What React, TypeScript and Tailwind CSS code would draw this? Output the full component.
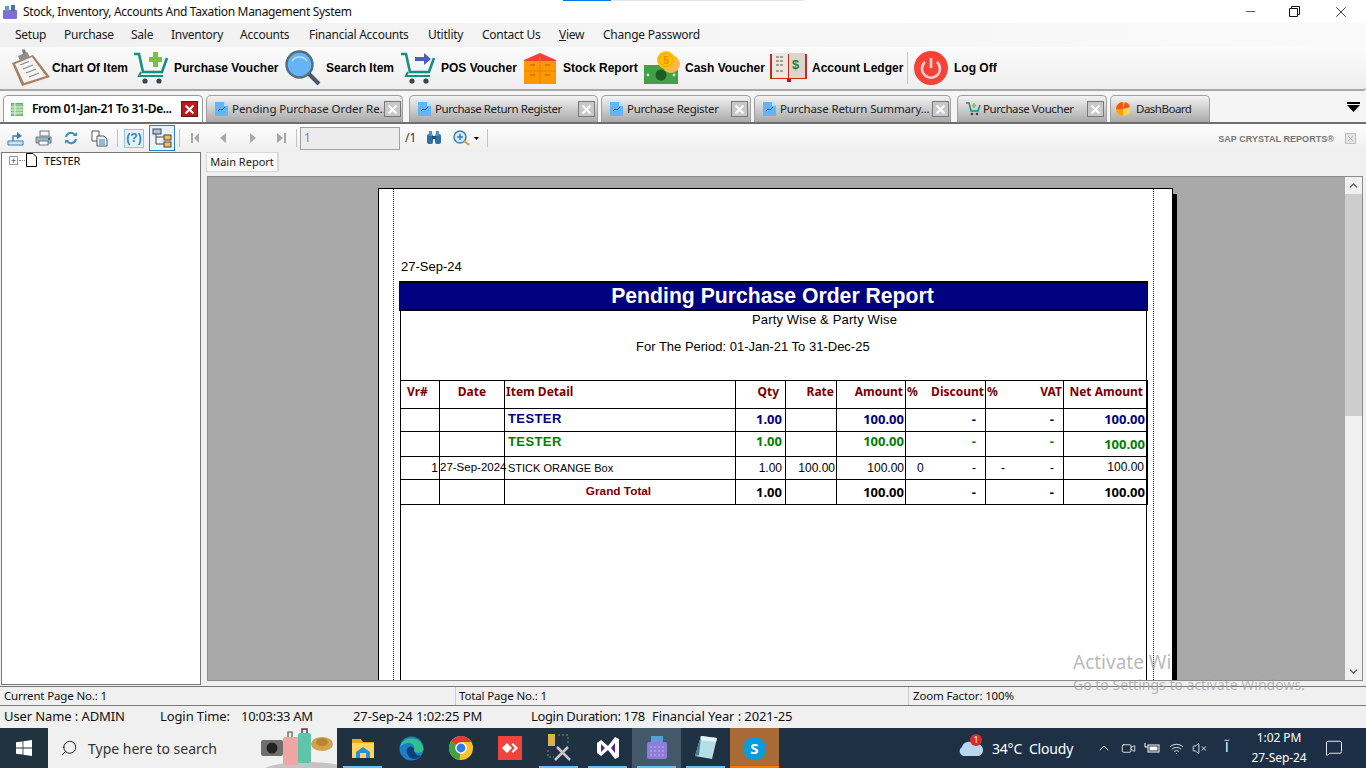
import React from "react";
import { ChevronUp, ChevronDown, X, Minus, Search, Video, Wifi, VolumeX, MessageSquare } from "lucide-react";

const ui = "font-['Noto_Sans',sans-serif]";
const report = "font-['Liberation_Sans',sans-serif]";

const menus = [
  ["Setup", "w-[49px]"],
  ["Purchase", "w-[67px]"],
  ["Sale", "w-[40px]"],
  ["Inventory", "w-[69px]"],
  ["Accounts", "w-[69px]"],
  ["Financial Accounts", "w-[119px]"],
  ["Utitlity", "w-[54px]"],
  ["Contact Us", "w-[77px]"],
];

const ClipboardIcon = () => (
  <svg width="40" height="38" viewBox="0 0 40 38">
    <path d="M2 14 L23 6 L40 28 L12 37 Z" fill="#a9805f" />
    <path d="M5 15 L22 8 L36 27 L14 34 Z" fill="#f4f4f2" />
    <path d="M8 7 L17 3 L20 8 L10 12 Z" fill="#8f8f8f" />
    <path d="M12 0.5 L15 0.5 L16 4 L13 5 Z" fill="#777" />
    <path d="M10 16 L19 12.5 M13 20 L23 16 M16 24 L26 20 M19 28 L29 24" stroke="#8a8a8a" strokeWidth="1.2" />
  </svg>
);

const CartIcon = ({ color }: { color: string }) => (
  <svg width="36" height="34" viewBox="0 0 36 34">
    <path d="M1 3 H6 L10 21 H29 L34 7" fill="none" stroke="#14917f" strokeWidth="2.6" />
    <path d="M8 21 L6 25 H30" fill="none" stroke="#14917f" strokeWidth="2" />
    <circle cx="12" cy="30" r="2.6" fill="#37474f" />
    <circle cx="26" cy="30" r="2.6" fill="#37474f" />
    {color === "green" ? (
      <path d="M16 7 H20 V2 H25 V7 H29 V12 H25 V17 H20 V12 H16 Z" transform="translate(0 -1)" fill="#7ac142" />
    ) : (
      <path d="M15 6 H24 V2 L31 8 L24 14 V10 H15 Z" fill="#4a5ec0" />
    )}
  </svg>
);

const MagnifierIcon = () => (
  <svg width="36" height="36" viewBox="0 0 36 36">
    <path d="M23 23 L34 34" stroke="#475a63" strokeWidth="4" />
    <circle cx="14.5" cy="14.5" r="13" fill="#64b5f6" stroke="#546e7a" strokeWidth="2.4" />
    <path d="M7 11 A9 9 0 0 1 22 11" fill="none" stroke="#bbdefb" strokeWidth="1.6" />
  </svg>
);

const BoxIcon = () => (
  <svg width="32" height="31" viewBox="0 0 32 31">
    <path d="M0 7 L16 0 L32 7 V10 H0 Z" fill="#f44336" />
    <rect y="8" width="32" height="23" fill="#ff9800" />
    <path d="M16 4 V31 M0 18 H32" stroke="#e08600" strokeWidth="1.2" />
    <path d="M6 12 H11 M21 12 H26 M6 22 H11 M21 22 H26" stroke="#a65f00" strokeWidth="1.2" />
  </svg>
);

const CashIcon = () => (
  <svg width="36" height="34" viewBox="0 0 36 34">
    <rect y="14" width="34" height="19" fill="#43a047" />
    <circle cx="17" cy="24" r="5.5" fill="#1b5e20" />
    <circle cx="4" cy="24" r="1.4" fill="#c8e6c9" />
    <circle cx="30" cy="24" r="1.4" fill="#c8e6c9" />
    <circle cx="27" cy="13" r="9" fill="#ffb74d" />
    <circle cx="22" cy="9" r="9" fill="#ffc107" />
    <circle cx="22" cy="9" r="6.5" fill="none" stroke="#ffa000" />
    <text x="19" y="13" fontSize="11" fill="#f08c00" fontFamily="Liberation Sans">5</text>
  </svg>
);

const LedgerIcon = () => (
  <svg width="38" height="30" viewBox="0 0 38 30">
    <rect y="1" width="37" height="25" fill="#c62828" />
    <rect x="2" y="0" width="16" height="25" fill="#efe6dd" />
    <rect x="19" y="0" width="16" height="25" fill="#dcd5cc" />
    <path d="M6 4 H14 M6 8 H14 M6 12 H14 M6 18 H14" stroke="#888" strokeWidth="1.4" strokeDasharray="3 1" />
    <text x="22" y="16" fontSize="13" fontWeight="700" fill="#2e7d32" fontFamily="Liberation Sans">$</text>
    <path d="M17 26 H21 V29 H17 Z" fill="#b71c1c" />
  </svg>
);

const PowerIcon = () => (
  <svg width="34" height="34" viewBox="0 0 34 34">
    <circle cx="17" cy="17" r="17" fill="#f44336" />
    <path d="M11 11 A9 9 0 1 0 23 11" fill="none" stroke="#ffcdd2" strokeWidth="2.6" />
    <path d="M17 7 V17" stroke="#ffcdd2" strokeWidth="2.6" />
  </svg>
);

const tools = [
  { label: "Chart Of Item", icon: <ClipboardIcon />, cls: "w-[40px] mr-[2px]", text: "w-[81px]" },
  { label: "Purchase Voucher", icon: <CartIcon color="green" />, cls: "w-[36px] mr-[5px]", text: "w-[111px]" },
  { label: "Search Item", icon: <MagnifierIcon />, cls: "w-[36px] mr-[5px]", text: "w-[74px]" },
  { label: "POS Voucher", icon: <CartIcon color="blue" />, cls: "w-[36px] mr-[5px]", text: "w-[83px]" },
  { label: "Stock Report", icon: <BoxIcon />, cls: "w-[32px] mr-[7px]", text: "w-[81px]" },
  { label: "Cash Voucher", icon: <CashIcon />, cls: "w-[36px] mr-[5px]", text: "w-[85px]" },
  { label: "Account Ledger", icon: <LedgerIcon />, cls: "w-[38px] mr-[4px]", text: "w-[93px]" },
];

const DocIcon = () => (
  <svg width="13" height="16" viewBox="0 0 13 16">
    <path d="M0 1 H9 L13 5 V15 H0 Z" fill="#64b5f6" />
    <path d="M9 1 L13 5 H9 Z" fill="#bbdefb" />
    <path d="M3 10 L5 8 L7 9 L10 6" fill="none" stroke="#1565c0" strokeWidth="1" />
  </svg>
);

const TabClose = () => (
  <span className="w-[17px] h-[16px] border border-[#777] bg-[#c8c8c8] flex items-center justify-center">
    <X size={13} strokeWidth={4} className="text-white" />
  </span>
);

function CartMini() {
  return (
    <svg width="15" height="14" viewBox="0 0 15 14">
      <path d="M0 1 H3 L5 9 H12 L14 3" fill="none" stroke="#14917f" strokeWidth="1.5" />
      <circle cx="6" cy="12" r="1.3" fill="#37474f" />
      <circle cx="11" cy="12" r="1.3" fill="#37474f" />
      <path d="M8 1 V6 M6 3.5 H10" stroke="#7ac142" strokeWidth="1.4" />
    </svg>
  );
}

const tabs = [
  { label: "Pending Purchase Order Re...", w: "w-[197px] mr-[6px]", text: "w-[152px] tracking-[-0.05px]", icon: <DocIcon /> },
  { label: "Purchase Return Register", w: "w-[189px] mr-[3px]", text: "w-[141px] tracking-[-0.42px]", icon: <DocIcon /> },
  { label: "Purchase Register", w: "w-[150px] mr-[3px]", text: "w-[102px] tracking-[-0.33px]", icon: <DocIcon /> },
  { label: "Purchase Return Summary...", w: "w-[197px] mr-[6px]", text: "w-[152px] tracking-[-0.14px]", icon: <DocIcon /> },
  { label: "Purchase Voucher", w: "w-[150px] mr-[3px]", text: "w-[102px] tracking-[-0.42px]", icon: <CartMini /> },
];

const tabBg = "bg-gradient-to-b from-[#f3f3f3] to-[#a9a9a9] border border-b-0 border-[#a0a0a0] rounded-t-[5px]";

const TitleBar = () => (
  <div className={`${ui} h-[23px] bg-white flex items-center relative`}>
    <div className="absolute left-[563px] top-0 w-[48px] h-[1px] bg-[#0078d7]" />
    <div className="absolute left-[611px] top-0 w-[193px] h-[1px] bg-[#e5e5e5]" />
    <svg className="ml-[3px]" width="14" height="14" viewBox="0 0 14 14">
      <rect x="0" y="5" width="14" height="9" rx="1" fill="#7e6fd0" />
      <rect x="2" y="1" width="4" height="5" fill="#5b9bd5" />
      <rect x="8" y="0" width="4" height="6" fill="#4a6fb5" />
    </svg>
    <span className="ml-[6px] text-[12px] text-[#111] tracking-[-0.33px]">Stock, Inventory, Accounts And Taxation Management System</span>
    <div className="ml-auto flex items-center text-black">
      <Minus size={15} strokeWidth={1} className="mr-[31px]" />
      <svg className="mr-[32px]" width="11" height="11" viewBox="0 0 11 11">
        <path d="M.5 2.5 H8.5 V10.5 H.5 Z M2.5 2.5 V.5 H10.5 V8.5 H8.5" fill="none" stroke="#111" />
      </svg>
      <X size={18} strokeWidth={1} className="mr-[16px]" />
    </div>
  </div>
);

const MenuBar = () => (
  <div className={`${ui} h-[24px] pl-[15px] bg-gradient-to-r from-[#f0f0f0] to-[#fafafa] flex items-center text-[12px] text-[#1a1a1a] tracking-[-0.25px]`}>
    {menus.map(([label, w]) => (
      <span key={label} className={w}>{label}</span>
    ))}
    <span className="w-[44px]"><u>V</u>iew</span>
    <span>Change Password</span>
  </div>
);

const ToolBar = () => (
  <div className={`${report} h-[44px] bg-gradient-to-b from-[#fbfbfb] to-[#eeeeee] border-b-2 border-[#a8a8a8] rounded-br-[3px] flex items-center pl-[10px] text-[12px] font-bold text-black`}>
    {tools.map((t) => (
      <React.Fragment key={t.label}>
        <span className={`${t.cls} flex justify-center shrink-0`}>{t.icon}</span>
        <span className={`${t.text} whitespace-nowrap shrink-0`}>{t.label}</span>
      </React.Fragment>
    ))}
    <span className="w-[1px] h-[32px] bg-[#c4c4c4] ml-[2px] mr-[6px]" />
    <PowerIcon />
    <span className="ml-[6px]">Log Off</span>
  </div>
);

const TabStrip = () => (
  <div className={`${ui} h-[31px] bg-[#f5f5f5] flex items-end pl-[3px] text-[11.5px] text-[#222] relative`}>
    <div className="w-[200px] h-[27px] mr-[3px] bg-white border border-b-0 border-[#999] rounded-t-[5px] flex items-center pl-[7px]">
      <svg width="12" height="13" viewBox="0 0 12 13">
        <rect width="12" height="13" fill="#8bc98a" stroke="#4c9a4c" />
        <path d="M0 4 H12 M0 7 H12 M0 10 H12 M4 0 V13" stroke="#e3f2e3" />
      </svg>
      <span className="ml-[9px] w-[149px] font-semibold text-[12px] tracking-[-0.4px] text-black whitespace-nowrap">From 01-Jan-21 To 31-De...</span>
      <span className="w-[17px] h-[16px] border border-[#7a1010] bg-[#b71c1c] flex items-center justify-center">
        <X size={13} strokeWidth={4} className="text-white" />
      </span>
    </div>
    {tabs.map((t) => (
      <div key={t.label} className={`${t.w} h-[27px] ${tabBg} flex items-center pl-[8px]`}>
        <span className="w-[17px] flex shrink-0">{t.icon}</span>
        <span className={`${t.text} whitespace-nowrap shrink-0`}>{t.label}</span>
        <span className="ml-auto mr-[2px]"><TabClose /></span>
      </div>
    ))}
    <div className={`w-[100px] h-[27px] ${tabBg} flex items-center pl-[5px]`}>
      <svg width="14" height="14" viewBox="0 0 14 14">
        <circle cx="7" cy="7" r="7" fill="#ffd54f" />
        <path d="M7 7 L7 0 A7 7 0 0 0 0 7 Z" fill="#f4511e" />
        <path d="M7 7 L14 5 A7 7 0 0 0 9 0 Z" fill="#f4511e" />
        <path d="M7 7 L0 7 A7 7 0 0 0 7 14 Z" fill="#ffa000" />
      </svg>
      <span className="ml-[6px] tracking-[-0.5px]">DashBoard</span>
    </div>
    <svg className="absolute right-[6px] top-[11px]" width="13" height="10" viewBox="0 0 13 10">
      <rect width="13" height="2" fill="#000" />
      <path d="M0 3 H13 L6.5 10 Z" fill="#000" />
    </svg>
  </div>
);

const ViewerToolbar = () => (
  <div className="h-[28px] bg-gradient-to-b from-[#fdfdfd] to-[#eeeeee] flex items-center pl-[7px] text-[#3f7cae]">
    <svg width="17" height="16" viewBox="0 0 17 16" className="mr-[11px]">
      <path d="M1 11 H16 V15 H1 Z" fill="#cfe4f5" stroke="#3b7fb6" />
      <path d="M6 11 V6 H11" fill="none" stroke="#3b7fb6" strokeWidth="1.4" />
      <path d="M10 2 L15 6 L10 9 Z" fill="#3b7fb6" />
    </svg>
    <svg width="17" height="16" viewBox="0 0 17 16" className="mr-[12px]">
      <rect x="5" y="1" width="9" height="5" fill="#f4f4f4" stroke="#777" />
      <path d="M1 7 H16 V13 H1 Z" fill="#9db4c8" stroke="#6b7f8f" />
      <rect x="4" y="11" width="9" height="4" fill="#fff" stroke="#777" />
      <rect x="13" y="8" width="2" height="2" fill="#2e7d32" />
    </svg>
    <svg width="14" height="14" viewBox="0 0 14 14" className="mr-[13px]">
      <path d="M2 6 A5 5 0 0 1 11 4 M12 8 A5 5 0 0 1 3 10" fill="none" stroke="#3b8ec2" strokeWidth="2" />
      <path d="M9 5 H13 V1 Z M5 9 H1 V13 Z" fill="#3b8ec2" />
    </svg>
    <svg width="17" height="17" viewBox="0 0 17 17" className="mr-[9px]">
      <path d="M1 1 H8 V11 H1 Z" fill="#fff" stroke="#555" />
      <path d="M6 6 H13 L16 9 V16 H6 Z" fill="#eaf2f9" stroke="#555" />
      <path d="M8 10 H14 M8 12 H14 M8 14 H14" stroke="#3b7fb6" />
    </svg>
    <span className="w-[1px] h-[18px] bg-[#c4c4c4] mr-[6px]" />
    <span className="w-[20px] h-[19px] border border-[#8fc4ee] bg-[#e6f3fc] text-[12px] font-bold flex items-center justify-center text-[#2f7fc0] mr-[5px] font-['Liberation_Sans',sans-serif]">(?)</span>
    <span className="w-[26px] h-[26px] border border-[#2f7fc0] bg-[#eaf3fb] flex items-center justify-center mr-[4px]">
      <svg width="20" height="20" viewBox="0 0 20 20">
        <rect x="1" y="1" width="8" height="5" fill="#a9c5e6" stroke="#444" />
        <rect x="12" y="7" width="7" height="5" fill="#f3c04f" stroke="#444" />
        <rect x="12" y="14" width="7" height="5" fill="#f3c04f" stroke="#444" />
        <path d="M4 6 V16 H12 M4 9 H12" fill="none" stroke="#444" />
      </svg>
    </span>
    <span className="w-[1px] h-[18px] bg-[#c4c4c4] mr-[11px]" />
    <svg width="100" height="12" viewBox="0 0 100 12" className="mr-[5px]" fill="#a8a8a8">
      <path d="M0 1 H2 V11 H0 Z M8 1 V11 L3 6 Z" />
      <path d="M35 1 V11 L29 6 Z" />
      <path d="M59 1 V11 L65 6 Z" />
      <path d="M86 1 V11 L92 6 Z M93 1 H95 V11 H93 Z" />
    </svg>
    <span className="w-[1px] h-[18px] bg-[#c4c4c4] mr-[3px]" />
    <div className={`${ui} w-[100px] h-[23px] border border-[#a0a0a0] bg-[#ececec] text-[12px] text-[#888] pl-[3px] leading-[20px]`}>1</div>
    <span className={`${ui} ml-[5px] text-[12px] text-[#333] w-[21px]`}>/1</span>
    <svg width="16" height="14" viewBox="0 0 16 14" className="mr-[11px]">
      <rect x="1" y="3" width="6" height="10" rx="2" fill="#2f6ea5" />
      <rect x="9" y="3" width="6" height="10" rx="2" fill="#2f6ea5" />
      <rect x="3" y="0" width="3" height="5" fill="#4d8fc6" />
      <rect x="10" y="0" width="3" height="5" fill="#4d8fc6" />
      <rect x="6" y="5" width="4" height="3" fill="#1d4f7c" />
    </svg>
    <svg width="17" height="16" viewBox="0 0 17 16">
      <circle cx="7" cy="7" r="6" fill="#d4e8f8" stroke="#3b7fb6" strokeWidth="1.5" />
      <path d="M7 4 V10 M4 7 H10" stroke="#2f7fc0" strokeWidth="1.5" />
      <path d="M11 11 L16 15" stroke="#e09a3e" strokeWidth="2" />
    </svg>
    <svg width="5" height="3" viewBox="0 0 5 3" className="ml-[4px] mr-[8px]"><path d="M0 0 H5 L2.5 3 Z" fill="#000" /></svg>
    <span className="w-[1px] h-[18px] bg-[#c4c4c4]" />
    <span className={`${report} ml-auto mt-[3px] text-[9px] font-bold text-[#777] tracking-[0.05px]`}>SAP CRYSTAL REPORTS®</span>
    <span className="ml-[11px] mr-[10px] w-[11px] h-[11px] border border-[#c0c0c0] bg-[#e4e4e4] flex items-center justify-center">
      <X size={9} className="text-[#a8a8a8]" />
    </span>
  </div>
);

const cols = ["w-[39px]", "w-[65px]", "w-[231px]", "w-[50px]", "w-[51px]", "w-[69px]", "w-[80px]", "w-[78px]", "w-[84px]"];
const cell = "border border-black align-middle p-0";
const hd = `${ui} text-[12px] leading-[14px] font-bold text-[#7b0000] pb-[5px]`;

const Totals = ({ color, pad, netPad }: { color: string; pad: string; netPad?: string }) => {
  const num = `${ui} text-[13px] leading-[14px] font-bold ${color}`;
  return (
    <>
      <td className={`${cell} ${num} ${pad} text-right pr-[3px]`}>1.00</td>
      <td className={cell} />
      <td className={`${cell} ${num} ${pad} text-right pr-[1px]`}>100.00</td>
      <td className={`${cell} ${num} ${pad} text-right pr-[9px]`}>-</td>
      <td className={`${cell} ${num} ${pad} text-right pr-[9px]`}>-</td>
      <td className={`${cell} ${num} ${netPad ?? pad} text-right pr-[2px]`}>100.00</td>
    </>
  );
};

const ReportTable = () => (
  <table className="table-fixed border-collapse w-[747px] -ml-[1px]">
    <colgroup>{cols.map((c, i) => <col key={i} className={c} />)}</colgroup>
    <tbody>
      <tr className="h-[28px]">
        <td className={`${cell} ${hd} pl-[6px]`}>Vr#</td>
        <td className={`${cell} ${hd} text-center`}>Date</td>
        <td className={`${cell} ${hd} pl-[1px]`}>Item Detail</td>
        <td className={`${cell} ${hd} text-right pr-[6px]`}>Qty</td>
        <td className={`${cell} ${hd} text-right pr-[2px]`}>Rate</td>
        <td className={`${cell} ${hd} text-right pr-[2px]`}>Amount</td>
        <td className={`${cell} ${hd}`}>
          <div className="flex justify-between pl-[1px] pr-[1px]"><span>%</span><span>Discount</span></div>
        </td>
        <td className={`${cell} ${hd}`}>
          <div className="flex justify-between pl-[1px] pr-[1px]"><span>%</span><span>VAT</span></div>
        </td>
        <td className={`${cell} ${hd} text-right pr-[4px]`}>Net Amount</td>
      </tr>
      <tr className="h-[23px]">
        <td className={cell} />
        <td className={cell} />
        <td className={`${cell} ${report} text-[13px] leading-[14px] pb-[3px] font-bold tracking-[0.4px] text-[#000080] pl-[3px]`}>TESTER</td>
        <Totals color="text-[#000080]" pad="pb-[2px]" />
      </tr>
      <tr className="h-[25px]">
        <td className={cell} />
        <td className={cell} />
        <td className={`${cell} ${report} text-[13px] leading-[14px] pb-[4px] font-bold tracking-[0.4px] text-[#008000] pl-[3px]`}>TESTER</td>
        <Totals color="text-[#008000]" pad="pb-[6px]" netPad="pb-0" />
      </tr>
      <tr className={`h-[23px] ${report} text-[12px] text-black`}>
        <td className={`${cell} text-right whitespace-nowrap pr-[1px]`}>1</td>
        <td className={`${cell} whitespace-nowrap text-[11.5px]`}>27-Sep-2024</td>
        <td className={`${cell} pl-[3px] text-[11px]`}>STICK ORANGE Box</td>
        <td className={`${cell} text-right pr-[3px]`}>1.00</td>
        <td className={`${cell} text-right pr-[1px]`}>100.00</td>
        <td className={`${cell} text-right pr-[1px]`}>100.00</td>
        <td className={cell}>
          <div className="flex justify-between pl-[11px] pr-[9px]"><span>0</span><span>-</span></div>
        </td>
        <td className={cell}>
          <div className="flex justify-between pl-[15px] pr-[9px]"><span>-</span><span>-</span></div>
        </td>
        <td className={`${cell} text-right pr-[3px] pb-[2px]`}>100.00</td>
      </tr>
      <tr className="h-[25px]">
        <td className={cell} />
        <td className={cell} />
        <td className={`${cell} ${report} text-[11.8px] font-bold text-[#7b0000] text-center pr-[3px] pb-[1px]`}>Grand Total</td>
        <Totals color="text-black" pad="pb-[1px]" />
      </tr>
    </tbody>
  </table>
);

const ReportPage = () => (
  <div className="relative ml-[170px] mt-[11px] w-[795px] h-[640px] bg-white border-t border-x border-black shadow-[4px_6px_0_#000]">
    <div className="absolute left-[14px] top-0 bottom-0 border-l border-dotted border-[#333]" />
    <div className="absolute right-[18px] top-0 bottom-0 border-l border-dotted border-[#333]" />
    <div className={`${report} text-[13px] text-black pt-[70px] pl-[22px] leading-[15px]`}>27-Sep-24</div>
    <div className="ml-[20px] mt-[7px] w-[749px]">
      <div className={`${report} h-[30px] bg-[#000080] border-t-2 border-x border-b-2 border-black text-white text-[21.2px] font-bold text-center leading-[26px] pr-[2px]`}>
        Pending Purchase Order Report
      </div>
      <div className="mx-[1px] h-[600px] border-x border-black">
        <div className={`${report} text-[13px] tracking-[0.15px] text-black pl-[351px] pt-[2px] leading-[14px]`}>Party Wise &amp; Party Wise</div>
        <div className={`${report} text-[13px] text-black pl-[235px] pt-[13px] leading-[14px]`}>For The Period: 01-Jan-21 To 31-Dec-25</div>
        <div className="mt-[26px]"><ReportTable /></div>
      </div>
    </div>
  </div>
);

const Body = () => (
  <div className="h-[564px] bg-[#f0f0f0] border-t-2 border-[#6f6f6f] flex flex-col">
    <ViewerToolbar />
    <div className="flex-1 flex min-h-0">
      <div className={`${ui} w-[200px] ml-[1px] border border-[#777] bg-white h-[533px] shrink-0 flex items-start pl-[7px] text-[11px] text-black tracking-[-0.2px]`}>
        <span className="w-[9px] h-[9px] border border-[#999] mt-[3px] flex items-center justify-center text-[#333] leading-none text-[9px]">+</span>
        <span className="w-[6px] mt-[7px] mx-[1px] border-t border-dotted border-[#888]" />
        <svg width="11" height="14" viewBox="0 0 11 14" className="mr-[7px]"><path d="M.5 .5 H7 L10.5 4 V13.5 H.5 Z" fill="#fff" stroke="#000" /></svg>
        TESTER
      </div>
      <div className="flex-1 flex flex-col ml-[4px] mr-[3px] min-w-0">
        <div className={`${ui} h-[24px] flex items-start`}>
          <span className="h-[20px] w-[73px] ml-[1px] border border-[#d8d8d8] border-r-2 bg-[#fafafa] text-[11px] text-[#222] flex items-center justify-center pt-[1px]">Main Report</span>
        </div>
        <div className="h-[505px] ml-[2px] border border-[#8a8a8a] flex bg-[#a8a8a8]">
          <div className="flex-1 overflow-hidden"><ReportPage /></div>
          <div className="w-[17px] bg-[#f0f0f0] flex flex-col items-center justify-between">
            <div className="flex flex-col items-center w-full">
              <ChevronUp size={13} strokeWidth={2.5} className="text-[#555] my-[2px]" />
              <div className="w-full h-[222px] bg-[#cdcdcd]" />
            </div>
            <ChevronDown size={13} strokeWidth={2.5} className="text-[#555] my-[2px]" />
          </div>
        </div>
      </div>
    </div>
  </div>
);

const StatusBar = () => (
  <div className={`${ui} h-[20px] bg-[#f0f0f0] border-y border-[#777] flex items-center text-[11.5px] text-[#111] tracking-[-0.15px]`}>
    <span className="w-[455px] pl-[4px]">Current Page No.: 1</span>
    <span className="w-[453px] pl-[3px] border-l border-[#ccc]">Total Page No.: 1</span>
    <span className="pl-[4px] border-l border-[#ccc]">Zoom Factor: 100%</span>
  </div>
);

const InfoBar = () => (
  <div className={`${ui} h-[22px] bg-[#f0f0f0] flex items-center pl-[4px] text-[13px] text-[#111] tracking-[-0.1px]`}>
    <span className="w-[156px]">User Name : ADMIN</span>
    <span className="w-[81px]">Login Time:</span>
    <span className="w-[112px] tracking-[-0.3px]">10:03:33 AM</span>
    <span className="w-[178px]">27-Sep-24 1:02:25 PM</span>
    <span className="w-[121px] tracking-[-0.35px] whitespace-nowrap">Login Duration: 178</span>
    <span>Financial Year : 2021-25</span>
  </div>
);

const EdgeIcon = () => (
  <svg width="25" height="25" viewBox="0 0 25 25">
    <circle cx="12.5" cy="12.5" r="12" fill="#1a7fc9" />
    <path d="M1 11 C3 1 22 -2 24.5 13 C24.5 17 18 18 15 15 C17 11 13 6 8 7 C5 8 2 9 1 11 Z" fill="#35c08a" />
    <path d="M8 17 C6 11 13 8 15 13 C15 18 19 21 22 19 C18 25 10 24 8 17 Z" fill="#0b3f7a" />
  </svg>
);

const ChromeIcon = () => (
  <svg width="24" height="24" viewBox="0 0 24 24">
    <circle cx="12" cy="12" r="12" fill="#fbc02d" />
    <path d="M12 12 L2 5.5 A12 12 0 0 1 22.5 6 H12 Z" fill="#e53935" />
    <path d="M12 12 L2 5.5 A12 12 0 0 0 10.5 24 Z" fill="#43a047" />
    <circle cx="12" cy="12" r="5.8" fill="#fff" />
    <circle cx="12" cy="12" r="4.4" fill="#2b7de9" />
  </svg>
);

const Slot = ({ cls, line, children }: { cls?: string; line?: string; children: React.ReactNode }) => (
  <div className={`w-[49px] h-[40px] flex items-center justify-center relative ${cls ?? ""}`}>
    {children}
    {line && <span className={`absolute bottom-0 left-[5px] right-[5px] h-[2px] ${line}`} />}
  </div>
);

const Taskbar = () => (
  <div className={`${ui} h-[40px] bg-gradient-to-r from-[#21333f] to-[#1c2f46] flex items-stretch text-white`}>
    <div className="w-[48px] flex items-center justify-center">
      <svg width="16" height="16" viewBox="0 0 16 16" fill="#fff">
        <path d="M0 2.3 L6.6 1.4 V7.6 H0 Z M7.4 1.3 L16 0 V7.6 H7.4 Z M0 8.4 H6.6 V14.6 L0 13.7 Z M7.4 8.4 H16 V16 L7.4 14.7 Z" />
      </svg>
    </div>
    <div className="w-[289px] bg-[#f0f0f0] flex items-center pl-[12px] text-[#333] text-[14px] relative overflow-hidden">
      <Search size={18} strokeWidth={1.3} className="-scale-x-100 text-[#222]" />
      <span className="ml-[10px]">Type here to search</span>
      <svg className="absolute right-0 top-0" width="80" height="40" viewBox="0 0 80 40">
        <ellipse cx="50" cy="43" rx="44" ry="9" fill="#c4c4c4" />
        <rect x="4" y="12" width="22" height="16" rx="2" fill="#6e6e6e" />
        <circle cx="15" cy="20" r="5.5" fill="#222" />
        <path d="M31 9 V4 H35 V9" fill="none" stroke="#555" strokeWidth="1.2" />
        <rect x="26" y="9" width="16" height="28" rx="2" fill="#f0a5a5" />
        <path d="M45 5 V1 H50 V5" fill="none" stroke="#444" strokeWidth="1.5" />
        <rect x="41" y="5" width="13" height="30" rx="2" fill="#5fc4aa" />
        <ellipse cx="65" cy="16" rx="11" ry="7" fill="#d4a24e" />
        <ellipse cx="65" cy="14" rx="6" ry="4" fill="#b98436" />
      </svg>
    </div>
    <div className="ml-[1px] flex">
      <Slot line="bg-[#76b9ed]">
        <svg width="22" height="19" viewBox="0 0 22 19">
          <path d="M0 0 H9 L11 3 H22 V19 H0 Z" fill="#e8a820" />
          <rect y="4" width="22" height="15" fill="#ffd561" />
          <path d="M4 19 V13 L11 8 L18 13 V19 H14 V14 H8 V19 Z" fill="#2a8fd8" />
        </svg>
      </Slot>
      <Slot><EdgeIcon /></Slot>
      <Slot><ChromeIcon /></Slot>
      <Slot>
        <span className="w-[24px] h-[24px] bg-[#ef443b] flex items-center justify-center">
          <svg width="16" height="10" viewBox="0 0 16 10" fill="#fff"><path d="M5 0 L10 5 L5 10 L0 5 Z M11 0 L16 5 L11 10 L9.5 8.5 L13 5 L9.5 1.5 Z" /></svg>
        </span>
      </Slot>
      <Slot line="bg-[#76b9ed]">
        <svg width="26" height="28" viewBox="0 0 26 28">
          <rect x="2" y="0" width="7" height="12" fill="#d9b44a" />
          <path d="M12 1 H22 V10 M2 16 V23 H8" fill="none" stroke="#4caf50" strokeDasharray="2 2" />
          <path d="M9 26 L22 13 M11 13 L24 26" stroke="#c8c8c8" strokeWidth="2.5" />
        </svg>
      </Slot>
      <Slot line="bg-[#76b9ed]">
        <svg width="22" height="26" viewBox="0 0 22 26">
          <path d="M0 8 L4 5 L11 11 L18 2 L22 4 V22 L18 24 L11 15 L4 21 L0 18 Z" fill="#fff" />
          <path d="M4 9 V17 L8 13 Z M14 13 L18 8 V18 Z" fill="#68217a" />
        </svg>
      </Slot>
      <Slot cls="bg-[#43586a]" line="bg-[#76b9ed]">
        <svg width="22" height="24" viewBox="0 0 22 24">
          <rect x="5" y="0" width="12" height="6" fill="#5c9bd6" />
          <rect x="1" y="6" width="20" height="17" rx="2" fill="#8e7cd8" />
          <path d="M4 11 H18 M4 15 H18 M4 19 H18" stroke="#c3b8ee" strokeDasharray="2 2" />
        </svg>
      </Slot>
      <Slot line="bg-[#76b9ed]">
        <svg width="24" height="26" viewBox="0 0 24 26">
          <path d="M7 1 L23 3 L18 24 L1 21 Z" fill="#b5dfe8" />
          <path d="M7 1 L23 3 L22 7 L6 5 Z" fill="#e4f3f6" />
          <path d="M1 21 L7 1 L5 20 Z" fill="#3d7f8e" />
        </svg>
      </Slot>
      <Slot cls="bg-[#a86a36]">
        <span className="w-[23px] h-[23px] rounded-full bg-[#0a9bdf] flex items-center justify-center text-[15px] font-bold">S</span>
        <span className="absolute bottom-0 left-0 right-0 h-[2px] bg-[#f57c00]" />
      </Slot>
    </div>
    <div className="ml-auto flex items-center">
      <div className="relative mr-[9px]">
        <svg width="25" height="18" viewBox="0 0 25 18"><path d="M5 17 A5 5 0 0 1 4 8 A7 7 0 0 1 16 5 A6 6 0 0 1 21 17 Z" fill="#b9d5f2" /></svg>
        <span className="absolute -top-[5px] left-[12px] w-[12px] h-[12px] rounded-full bg-[#d32f2f] text-[8px] flex items-center justify-center">1</span>
      </div>
      <span className="text-[14px] w-[101px] tracking-[-0.2px]">34°C&nbsp; Cloudy</span>
      <ChevronUp size={16} strokeWidth={1.5} className="mr-[9px] ml-[3px]" />
      <Video size={15} strokeWidth={1.3} className="mr-[8px]" />
      <svg width="16" height="12" viewBox="0 0 16 12" className="mr-[9px]" fill="none" stroke="#fff"><rect x="4" y="3" width="11" height="7" /><rect x="6" y="5" width="7" height="3" fill="#fff" /><path d="M1 1 V5 H4" /></svg>
      <Wifi size={15} strokeWidth={1.3} className="mr-[8px]" />
      <VolumeX size={15} strokeWidth={1.3} className="mr-[18px]" />
      <span className="font-['DejaVu_Sans',sans-serif] text-[13px] w-[24px]">آ</span>
      <div className="w-[60px] text-[12px] leading-[20px] text-center tracking-[-0.1px]">
        <div>1:02 PM</div>
        <div>27-Sep-24</div>
      </div>
      <MessageSquare size={18} strokeWidth={1.2} className="ml-[16px] mr-[23px]" />
    </div>
  </div>
);

export default function App() {
  return (
    <div className="relative w-[1366px] h-[768px] overflow-hidden bg-white flex flex-col">
      <TitleBar />
      <MenuBar />
      <ToolBar />
      <TabStrip />
      <Body />
      <StatusBar />
      <InfoBar />
      <Taskbar />
      <div className={`${ui} absolute left-[1073px] top-[650px] text-[19px] text-[#9a9a9a]/70 leading-[24px] whitespace-nowrap`}>Activate Wi</div>
      <div className={`${ui} absolute left-[1073px] top-[677px] text-[14px] text-[#9a9a9a]/70 leading-[16px] whitespace-nowrap`}>Go to Settings to activate Windows.</div>
    </div>
  );
}
